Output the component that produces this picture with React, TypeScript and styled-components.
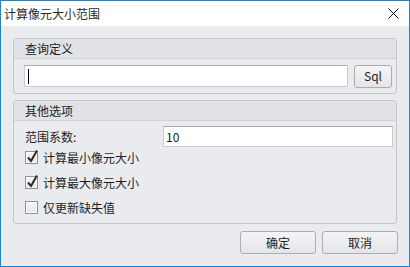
import React from "react";
import styled, { createGlobalStyle } from "styled-components";

const Global = createGlobalStyle`
  html, body { margin: 0; padding: 0; background: #ffffff; }
  body { font-family: "Noto Sans CJK SC", "Noto Sans", sans-serif; font-size: 12px; color: #1e1e1e; }
  * { box-sizing: border-box; }
`;

const Window = styled.div`
  width: 410px;
  height: 267px;
  border: 1px solid #1883d7;
  display: flex;
  flex-direction: column;
  background: #eaebef;
`;

const TitleBar = styled.div`
  height: 25px;
  flex: none;
  background: #ffffff;
  display: flex;
  align-items: center;
  justify-content: space-between;
  padding: 0 10px 0 3px;
`;

const Title = styled.span`
  font-size: 12px;
  line-height: 25px;
  color: #2a2a2a;
`;

const Content = styled.div`
  flex: 1;
  display: flex;
  flex-direction: column;
  padding: 12px 12px 12px 12px;
`;

const Group = styled.div<{ $mt?: number }>`
  border: 1px solid #c4c5c9;
  border-radius: 3px;
  margin-top: ${(p) => p.$mt ?? 0}px;
  display: flex;
  flex-direction: column;
`;

const GroupHeader = styled.div`
  height: 20px;
  background: #e1e2e6;
  border-bottom: 1px solid #d2d3d7;
  padding-left: 11px;
  font-size: 12px;
  line-height: 19px;
  color: #1e1e1e;
`;

const GroupBody = styled.div<{ $pad: string }>`
  padding: ${(p) => p.$pad};
  display: flex;
  flex-direction: column;
`;

const QueryRow = styled.div`
  display: flex;
  align-items: center;
  gap: 6px;
  height: 22px;
`;

const TextBox = styled.div<{ $h: number }>`
  flex: 1;
  height: ${(p) => p.$h}px;
  background: #ffffff;
  border: 1px solid #c8cbd0;
  border-top-color: #a9abb1;
  display: flex;
  align-items: center;
  padding-left: 2px;
  font-size: 12px;
  color: #1a1a1a;
`;

const Caret = styled.span`
  display: inline-block;
  width: 1px;
  height: 15px;
  background: #000;
  margin-left: 1px;
`;

const Button = styled.button<{ $w: number; $h: number }>`
  width: ${(p) => p.$w}px;
  height: ${(p) => p.$h}px;
  flex: none;
  border: 1px solid #adadad;
  border-radius: 3px;
  background: linear-gradient(#f4f4f6, #e4e5e9);
  font-family: "Noto Sans CJK SC", "Noto Sans", sans-serif;
  font-size: 12px;
  color: #1e1e1e;
  padding: 0;
  display: flex;
  align-items: center;
  justify-content: center;
  line-height: 1;
`;

const FieldRow = styled.div`
  display: flex;
  align-items: center;
  height: 21px;
`;

const FieldLabel = styled.span`
  width: 138px;
  flex: none;
  font-size: 12px;
`;

const CheckList = styled.div`
  display: flex;
  flex-direction: column;
  gap: 4px;
`;

const CheckRow = styled.label`
  display: flex;
  align-items: center;
  gap: 5px;
  height: 21px;
  font-size: 12px;
`;

const Box = styled.span`
  position: relative;
  width: 13px;
  height: 13px;
  flex: none;
  border: 1px solid #8e8f90;
  background: linear-gradient(#f6f6f6, #e6e6e6);
  box-shadow: inset 0 0 0 1px #ffffff;
`;

const Tick = styled.svg`
  position: absolute;
  left: 0px;
  top: -3px;
  width: 13px;
  height: 14px;
  overflow: visible;
`;

const ButtonRow = styled.div`
  margin-top: 7px;
  display: flex;
  justify-content: flex-end;
  gap: 6px;
  margin-right: -1px;
`;

function CheckItem({ checked, label }: { checked: boolean; label: string }) {
  return (
    <CheckRow>
      <Box>
        {checked && (
          <Tick viewBox="0 0 13 14">
            <path d="M2 8.5 L5 12 L11 1.5" fill="none" stroke="#2c2c2c" strokeWidth="2" strokeLinejoin="miter" />
          </Tick>
        )}
      </Box>
      <span>{label}</span>
    </CheckRow>
  );
}

export default function App() {
  return (
    <>
      <Global />
      <Window>
        <TitleBar>
          <Title>计算像元大小范围</Title>
          <svg width="11" height="11" viewBox="0 0 11 11">
            <path d="M0.5 0.5 L10.5 10.5 M10.5 0.5 L0.5 10.5" stroke="#111" strokeWidth="1" fill="none" />
          </svg>
        </TitleBar>
        <Content>
          <Group>
            <GroupHeader>查询定义</GroupHeader>
            <GroupBody $pad="6px 4px 6px 10px">
              <QueryRow>
                <TextBox $h={22}>
                  <Caret />
                </TextBox>
                <Button $w={38} $h={23}>Sql</Button>
              </QueryRow>
            </GroupBody>
          </Group>
          <Group $mt={6}>
            <GroupHeader>其他选项</GroupHeader>
            <GroupBody $pad="5px 3px 5px 11px">
              <FieldRow>
                <FieldLabel>范围系数:</FieldLabel>
                <TextBox $h={21}>10</TextBox>
              </FieldRow>
              <CheckList>
                <CheckItem checked label="计算最小像元大小" />
                <CheckItem checked label="计算最大像元大小" />
                <CheckItem checked={false} label="仅更新缺失值" />
              </CheckList>
            </GroupBody>
          </Group>
          <ButtonRow>
            <Button $w={76} $h={23}>确定</Button>
            <Button $w={76} $h={23}>取消</Button>
          </ButtonRow>
        </Content>
      </Window>
    </>
  );
}
